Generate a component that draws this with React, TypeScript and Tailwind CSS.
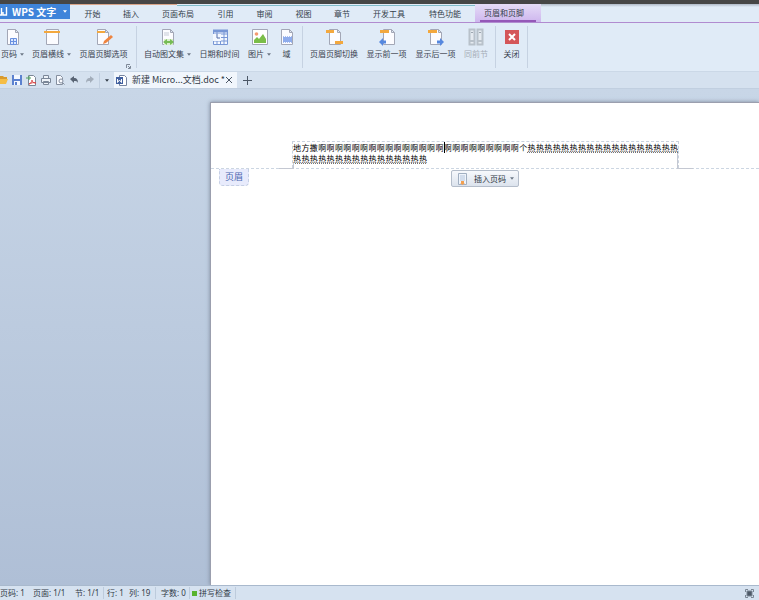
import React from 'react';

interface RibbonItemProps {
  label: string;
  width: string;
  arrow?: boolean;
  disabled?: boolean;
  children: React.ReactNode;
}

const Caret = ({ className = '' }: { className?: string }) => (
  <svg viewBox="0 0 5 3" className={`w-[4px] h-[3px] shrink-0 ${className}`}>
    <path d="M0 0h5L2.5 3z" fill="currentColor" />
  </svg>
);

const RibbonItem: React.FC<RibbonItemProps> = ({ label, width, arrow, disabled, children }) => (
  <button
    type="button"
    disabled={disabled}
    className={`flex flex-col items-center shrink-0 pt-[3px] ${width} ${disabled ? 'text-[#a5acb6]' : 'text-[#39424e]'}`}
  >
    <svg viewBox="0 0 18 18" className="w-[18px] h-[18px]" fill="none">
      {children}
    </svg>
    <span className="mt-[2px] flex items-center gap-[3px] leading-3 whitespace-nowrap">
      {label}
      {arrow && <Caret className="text-[#6d7886]" />}
    </span>
  </button>
);

const Divider = () => <span className="w-px h-[42px] mt-px shrink-0 bg-[#c6d2e2]" />;

const Sheet = ({ x = 3 }: { x?: number }) => (
  <path
    transform={`translate(${x} 1)`}
    d="M.5.5h8l3 3v12h-11zM8.5.5v3h3"
    fill="#fcfcff"
    stroke="#a3a7b6"
  />
);

const tabs = [
  { label: '开始', width: 'w-[39px]' },
  { label: '插入', width: 'w-[38px]' },
  { label: '页面布局', width: 'w-[56px]' },
  { label: '引用', width: 'w-[39px]' },
  { label: '审阅', width: 'w-[39px]' },
  { label: '视图', width: 'w-[39px]' },
  { label: '章节', width: 'w-[38px]' },
  { label: '开发工具', width: 'w-[56px]' },
  { label: '特色功能', width: 'w-[56px]' },
];

const TabBar = () => (
  <nav className="flex h-[19px] border-b border-[#b18bd0] bg-[#e0ebf7] text-[#343e4a]">
    <button
      type="button"
      className="flex items-center w-[70px] h-[15px] shrink-0 bg-[#3f84da] text-white font-bold whitespace-nowrap"
    >
      <svg viewBox="0 0 8 9" className="w-[8px] h-[9px] mr-1 shrink-0" fill="none" stroke="#fff" strokeWidth="1.4">
        <path d="M0 8h1.500V1M3 5v3h3.500V0" />
      </svg>
      <span className="flex-1 text-left text-[10px] font-['Noto_Sans_CJK_SC',sans-serif]">WPS 文字</span>
      <Caret className="mr-[3px]" />
    </button>
    <div className="w-[405px] shrink-0">
      <div className="flex h-[2px]">
        <span className="w-[107px] h-px bg-[#d9a58a]" />
        <span className="flex-1 border-b border-[#80bcca]" />
      </div>
      <div className="flex pl-[3px]">
        {tabs.map((t) => (
          <button key={t.label} type="button" className={`shrink-0 leading-[15px] whitespace-nowrap ${t.width}`}>
            {t.label}
          </button>
        ))}
      </div>
    </div>
    <button type="button" className="w-[66px] shrink-0 px-[5px] bg-linear-to-b from-[#e5dcf6] to-[#ceb6ee]">
      <span className="block h-[18px] pl-1 border-b-2 border-[#9458b8] text-left leading-[18px]">页眉和页脚</span>
    </button>
    <div className="flex-1 h-[3px] bg-linear-to-b from-[#aeb8c6] to-[#e0ebf7]" />
  </nav>
);

const Ribbon = () => (
  <div className="relative flex h-[49px] pt-[2px] border-b border-[#cbd8e7] bg-[#e0ebf7] overflow-hidden">
    <RibbonItem label="页码" width="w-[25px]" arrow>
      <Sheet />
      <path d="M6.5 10.5h6v6h-6zM6.5 13.5h6M9.5 10.5v6" fill="#dce8ff" stroke="#6a91e0" />
    </RibbonItem>
    <RibbonItem label="页眉横线" width="w-[53px]" arrow>
      <path d="M3.5 1.5h12v15h-12z" fill="#fcfcff" stroke="#a3a7b6" />
      <path d="M1 4h16" stroke="#f3a83e" strokeWidth="2" />
    </RibbonItem>
    <RibbonItem label="页眉页脚选项" width="w-[51px]">
      <Sheet x={2} />
      <path d="M2 4h8" stroke="#f3a83e" strokeWidth="2" />
      <path d="M8 16l1-3 7-6 2 2-7 6z" fill="#ee8440" />
    </RibbonItem>
    <svg viewBox="0 0 5 5" className="absolute left-[126px] bottom-[2px] w-[5px] h-[5px]" fill="none" stroke="#7e8997">
      <path d="M.5 4V.5H4M2 2l2 2M4.5 2v2.5H2" />
    </svg>
    <span className="w-[7px] shrink-0" />
    <Divider />
    <span className="w-[4px] shrink-0" />
    <RibbonItem label="自动图文集" width="w-[53px]" arrow>
      <Sheet />
      <path d="M5 5h5M5 7h5" stroke="#c5cad5" />
      <path d="M5 11h9v6H5z" fill="#d9efcc" />
      <path d="M4 14l4-3v2h3v-2l4 3-4 3v-2H8v2z" fill="#76bb55" />
    </RibbonItem>
    <RibbonItem label="日期和时间" width="w-[51px]">
      <path d="M2.5 2.5h14v14h-14zM2 6h14M6 2v14M9.5 6v10M13 2v14M3 9.5h13M3 13h13" stroke="#7897d5" fill="#f4f8ff" />
      <path d="M2 3h15" stroke="#7897d5" strokeWidth="3" />
      <path d="M2 6h8v7H2z" fill="#f4f8ff" />
      <path d="M6 6v4h3" stroke="#526da8" />
    </RibbonItem>
    <RibbonItem label="图片" width="w-[29px]" arrow>
      <path d="M1.5 1.5h15v15h-15z" fill="#fff" stroke="#a3a7b6" />
      <circle cx="5.5" cy="6" r="1.8" fill="#f49a72" />
      <path d="M3 15v-3l3-3 2 2 4-5 3 5v4z" fill="#7abd48" />
    </RibbonItem>
    <RibbonItem label="域" width="w-[25px]">
      <Sheet />
      <path d="M5 9h9v5H5z" fill="#8facec" />
      <path d="M5 8.5h9M5 14.5h9" stroke="#a8bff0" strokeDasharray="1 1" />
    </RibbonItem>
    <span className="w-[3px] shrink-0" />
    <Divider />
    <span className="w-[5px] shrink-0" />
    <RibbonItem label="页眉页脚切换" width="w-[52px]">
      <Sheet x={4} />
      <path d="M1 3.5h8M10 14.500h8" stroke="#f3a83e" strokeWidth="3" />
    </RibbonItem>
    <RibbonItem label="显示前一项" width="w-[53px]">
      <Sheet x={5} />
      <path d="M2 3.5h9" stroke="#f3a83e" strokeWidth="3" />
      <path d="M1 14l4-4v2.5h3v3H5V18z" fill="#5688df" />
    </RibbonItem>
    <RibbonItem label="显示后一项" width="w-[45px]">
      <Sheet x={3} />
      <path d="M1 3.5h9" stroke="#f3a83e" strokeWidth="3" />
      <path d="M17 14l-4-4v2.5h-3v3h3V18z" fill="#5688df" />
    </RibbonItem>
    <RibbonItem label="同前节" width="w-[36px]" disabled>
      <path d="M2.5 1.5h5v15h-5zM10.5 1.5h5v15h-5z" fill="#e5eaf0" stroke="#b8c1ca" strokeWidth="2" />
      <path d="M4 4.500h2M12 4.500h2" stroke="#9da6b0" />
      <path d="M3 13h4M11 13h4" stroke="#b8c1ca" strokeWidth="2" />
    </RibbonItem>
    <span className="w-px shrink-0" />
    <Divider />
    <RibbonItem label="关闭" width="w-[31px]">
      <path d="M2 2h14v14H2z" fill="#d45659" />
      <path d="M6 6l6 6M12 6l-6 6" stroke="#fff" strokeWidth="2" />
    </RibbonItem>
    <Divider />
  </div>
);

const QuickBar = () => (
  <div className="flex items-center h-[17px] bg-[#d5e1ef] border-b border-[#c1cfe0] text-[#333c48]">
    <div className="flex items-center gap-[4px] w-[99px] shrink-0">
      <button type="button" aria-label="打开" className="w-[8px]">
        <svg viewBox="0 0 8 10" className="w-[8px] h-[10px]">
          <path d="M0 1h3l1 1h3v2H0z" fill="#d99a2d" />
          <path d="M0 4h8L6 9H0z" fill="#f5bd45" />
        </svg>
      </button>
      <button type="button" aria-label="保存">
        <svg viewBox="0 0 10 10" className="w-[10px] h-[10px]">
          <path d="M0 0h10v10H0z" fill="#5b81cf" />
          <path d="M2 0h6v4H2zM2 6h6v4H2z" fill="#f4f8ff" />
          <path d="M3 7h2v3H3z" fill="#5b81cf" />
        </svg>
      </button>
      <button type="button" aria-label="输出PDF">
        <svg viewBox="0 0 11 11" className="w-[11px] h-[11px]" fill="none">
          <path d="M2.5.5h5l2 2v8h-7z" fill="#fff" stroke="#7b8796" />
          <path d="M0 3h4M2.5 1l2 2-2 2" stroke="#4da45b" />
          <path d="M3 9c3-1 3-4 3-4s0 3 4 3c-2-1-5 0-7 1z" stroke="#d94343" />
        </svg>
      </button>
      <button type="button" aria-label="打印">
        <svg viewBox="0 0 10 10" className="w-[10px] h-[10px]" fill="#edf2f8" stroke="#7b8798">
          <path d="M2.5.5h5v3h-5zM.5 3.5h9v4h-9zM2.5 6.5h5v3h-5z" />
        </svg>
      </button>
      <button type="button" aria-label="打印预览">
        <svg viewBox="0 0 10 10" className="w-[10px] h-[10px]" fill="#f8faff" stroke="#858f9f">
          <path d="M1.5.5h4l2 2v7h-6z" />
          <circle cx="6" cy="6" r="2" />
          <path d="M7.5 7.5l2 2" />
        </svg>
      </button>
      <button type="button" aria-label="撤销" className="ml-px">
        <svg viewBox="0 0 9 8" className="w-[9px] h-[8px]">
          <path d="M0 3l4-3v2c3 0 4 2 4 5-1-2-2-2-4-2v2z" fill="#596474" />
        </svg>
      </button>
      <button type="button" aria-label="恢复" className="ml-[2px]">
        <svg viewBox="0 0 9 8" className="w-[9px] h-[8px]">
          <path d="M9 3L5 0v2C2 2 1 4 1 7c1-2 2-2 4-2v2z" fill="#a3adba" />
        </svg>
      </button>
    </div>
    <div className="flex items-center justify-center w-[15px] h-[15px] shrink-0 border-l border-[#c1cfe0]">
      <Caret />
    </div>
    <div className="flex items-center w-[123px] h-full shrink-0 pl-[2px] bg-[#f1f6fc] whitespace-nowrap">
      <svg viewBox="0 0 11 11" className="w-[11px] h-[11px] shrink-0" fill="none">
        <path d="M3.5.5h5l2 2v8h-7z" fill="#fff" stroke="#7785a0" />
        <path d="M0 2h7v7H0z" fill="#41609f" />
        <path d="M1.5 4v3.5L3.5 5l2 2.5V4" stroke="#fff" />
      </svg>
      <span className="flex-1 ml-[5px] text-[9px] leading-3 font-['Noto_Sans_CJK_SC',sans-serif]">
        新建 Micro...文档.doc *
      </span>
      <button type="button" aria-label="关闭文档" className="mr-[5px]">
        <svg viewBox="0 0 6 6" className="w-[6px] h-[6px]" stroke="#4c5766">
          <path d="M0 0l6 6M6 0L0 6" />
        </svg>
      </button>
    </div>
    <button type="button" aria-label="新建" className="ml-[6px]">
      <svg viewBox="0 0 9 9" className="w-[9px] h-[9px]" stroke="#4c5766">
        <path d="M4.5 0v9M0 4.5h9" />
      </svg>
    </button>
  </div>
);

const Workspace = () => (
  <main className="flex-1 flex pt-[13px] bg-linear-to-b from-[#c8d6e7] to-[#afbfd6] overflow-hidden">
    <div className="w-[210px] shrink-0" />
    <article className="flex-1 border-l border-t border-[#9b9fae] bg-white shadow-[0_0_4px_#7b8799]">
      <header className="pt-[38px] border-b border-dashed border-[#ccd6e2]">
        <div className="relative w-[387px] h-[27px] ml-[81px] border border-b-0 border-dashed border-[#c9d2de] leading-[11px] text-black">
          <p className="[text-align-last:justify] whitespace-nowrap">
            地方撒{'啊'.repeat(24)}个
            <span className="underline decoration-dotted decoration-1 decoration-[#777]">{'热'.repeat(18)}</span>
          </p>
          <p className="w-[134px] [text-align-last:justify] whitespace-nowrap underline decoration-dotted decoration-1 decoration-[#777]">
            {'热'.repeat(16)}
          </p>
          {/* text cursor and margin corners */}
          <span className="absolute left-[151px] top-0 w-px h-[11px] bg-black" />
          <span className="absolute -left-[14px] -bottom-px w-[15px] h-[6px] border-r border-b border-[#c4c8d2]" />
          <span className="absolute -right-[15px] -bottom-px w-[16px] h-[16px] border-l border-b border-[#c4c8d2]" />
        </div>
      </header>
      <div className="flex items-start">
        <span className="ml-[8px] w-[30px] h-[17px] text-center text-[9px] leading-4 rounded-b border border-t-0 border-dashed border-[#c5cfe4] bg-[#e8ebfc] text-[#4865b0]">
          页眉
        </span>
        <button
          type="button"
          className="flex items-center ml-[202px] mt-px w-[68px] h-[17px] pl-[6px] border border-[#b4bdca] rounded-xs bg-linear-to-b from-[#f7f9fc] to-[#dce3ed] text-[#2e3743] whitespace-nowrap"
        >
          <svg viewBox="0 0 9 12" className="w-[9px] h-[12px]" fill="none">
            <path d="M.5.5h8v11h-8z" fill="#eff4fb" stroke="#a1afc1" />
            <path d="M2 3h5M2 5h5M2 7h5" stroke="#b4c5dd" />
            <path d="M3 8h3v2h1l-2.5 2L2 10h1z" fill="#f3a050" />
          </svg>
          <span className="ml-[7px] mr-[4px]">插入页码</span>
          <Caret className="text-[#6d7886]" />
        </button>
      </div>
    </article>
  </main>
);

const StatusBar = () => (
  <footer className="flex items-center h-[15px] shrink-0 border-t border-[#a9b9cd] bg-[#d6e2f0] text-[#333c48] whitespace-nowrap">
    <span className="w-[33px]">页码: 1</span>
    <span className="w-[42px]">页面: 1/1</span>
    <span className="w-[28px]">节: 1/1</span>
    <span className="w-[26px] pl-[3px] border-l border-[#bdcbdc]">行: 1</span>
    <span className="w-[26px]">列: 19</span>
    <span className="w-[34px] pl-[5px] border-l border-[#bdcbdc]">字数: 0</span>
    <button type="button" className="flex items-center gap-[2px] w-[47px] pl-[2px] border-x border-[#bdcbdc]">
      <span className="w-[5px] h-[5px] bg-[#58b32d]" />
      拼写检查
    </button>
    <button type="button" aria-label="全屏显示" className="ml-auto mr-[5px]">
      <svg viewBox="0 0 9 9" className="w-[9px] h-[9px]" fill="none" stroke="#7b8795">
        <path d="M2 2h5v5H2z" fill="#4e5967" />
        <path d="M.5 3V.5H3M6 .5h2.5V3M8.5 6v2.5H6M3 8.5H.5V6" />
      </svg>
    </button>
  </footer>
);

export default function App() {
  return (
    <div className="flex flex-col h-screen overflow-hidden text-[8px] font-['Noto_Sans','Noto_Sans_CJK_SC',sans-serif]">
      <div className="h-1 shrink-0 bg-[#464646]" />
      <TabBar />
      <Ribbon />
      <QuickBar />
      <Workspace />
      <StatusBar />
    </div>
  );
}
